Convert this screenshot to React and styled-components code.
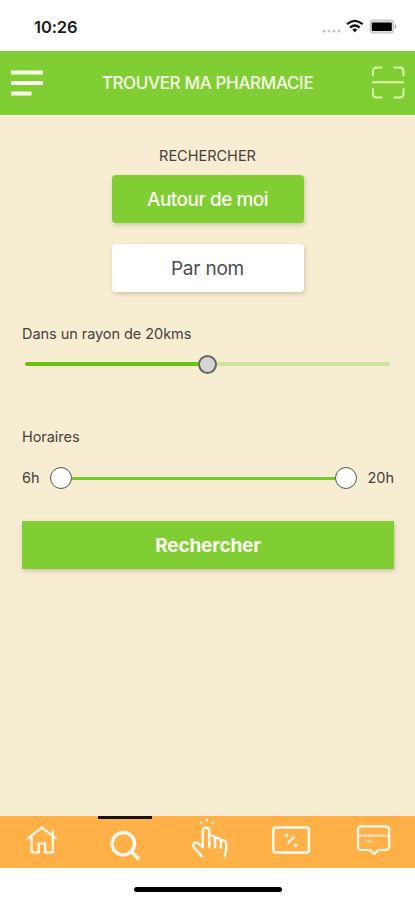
import styled, { createGlobalStyle } from "styled-components";

const GlobalStyle = createGlobalStyle`
  * {
    box-sizing: border-box;
  }
  body {
    margin: 0;
    background: #fff;
    font-family: Inter, "Liberation Sans", sans-serif;
  }
  button {
    font-family: inherit;
    padding: 0;
    border: none;
  }
`;

const Screen = styled.div`
  display: flex;
  flex-direction: column;
  width: 415px;
  height: 900px;
  overflow: hidden;
`;

const StatusBar = styled.div`
  display: flex;
  align-items: center;
  justify-content: space-between;
  height: 51px;
  padding: 3px 17px 0 34px;
`;

const Time = styled.span`
  font-size: 16.5px;
  font-weight: 600;
  letter-spacing: -0.1px;
  color: #1c1c1c;
`;

const Header = styled.header`
  display: flex;
  align-items: center;
  justify-content: space-between;
  height: 64px;
  padding: 0 10px 0 11px;
  background: #80ce33;
`;

const Title = styled.h1`
  margin: 0;
  padding-right: 2px;
  font-size: 17px;
  font-weight: 500;
  letter-spacing: -0.35px;
  color: #f8ffe9;
`;

const Main = styled.main`
  display: flex;
  flex-direction: column;
  flex: 1;
  padding: 31px 21px 0 22px;
  background: #f7edd3;
`;

const Choices = styled.div`
  display: flex;
  flex-direction: column;
  align-items: center;
  padding-right: 1px;
`;

const Label = styled.div`
  height: 20px;
  font-size: 14.5px;
  line-height: 20px;
  letter-spacing: ${(props) => props.$spacing || "-0.05px"};
  white-space: nowrap;
  color: #46423a;
`;

const Button = styled.button`
  width: 192px;
  height: 48px;
  margin-top: ${(props) => props.$top};
  border-radius: 4px;
  background: ${(props) => (props.$primary ? "#80ce33" : "#fff")};
  box-shadow: 1px 2px 4px rgba(90, 80, 50, 0.25);
  font-size: 19px;
  font-weight: ${(props) => (props.$primary ? 500 : 400)};
  letter-spacing: ${(props) => (props.$primary ? "-0.5px" : "-0.2px")};
  color: ${(props) => (props.$primary ? "#fbfff0" : "#4b4c50")};
`;

const SubmitButton = styled(Button)`
  flex: none;
  width: 372px;
  border-radius: 0;
  font-weight: 700;
  letter-spacing: -0.15px;
`;

const Field = styled.section`
  margin-top: ${(props) => props.$top};
`;

const RadiusSlider = styled.div`
  display: flex;
  align-items: center;
  height: 20px;
  margin: 10px 4px 0 3px;
`;

const Track = styled.div`
  flex: 1;
  height: ${(props) => props.$height || "4px"};
  border-radius: ${(props) => props.$radius || "0"};
  background: ${(props) => props.$color};
`;

const Thumb = styled.div`
  flex: none;
  width: ${(props) => props.$size};
  height: ${(props) => props.$size};
  border: ${(props) => props.$border};
  border-radius: 50%;
  background: ${(props) => props.$fill};
`;

const HoursRow = styled.div`
  display: flex;
  align-items: center;
  height: 22px;
  margin-top: 20px;
`;

const Hour = styled(Label)`
  width: ${(props) => props.$width};
  text-align: ${(props) => props.$align || "left"};
`;

const TabBar = styled.nav`
  display: grid;
  grid-template-columns: repeat(5, 1fr);
  height: 52px;
  background: #ffb148;
`;

const Tab = styled.a`
  position: relative;
  height: 52px;
  color: #fffaf0;

  svg {
    display: block;
  }
`;

const ActiveMark = styled.span`
  position: absolute;
  top: 0;
  left: 15px;
  width: 54px;
  height: 3px;
  background: #16120b;
`;

const HomeIndicator = styled.div`
  display: flex;
  justify-content: center;
  height: 32px;
  padding-top: 19px;

  &::after {
    content: "";
    width: 148px;
    height: 5px;
    border-radius: 3px;
    background: #000;
  }
`;

const StatusIcons = () => (
  <svg width="78" height="18" viewBox="0 0 78 18">
    <g fill="#c4c4c4">
      <circle cx="4" cy="13.2" r="1.4" />
      <circle cx="9" cy="13.2" r="1.4" />
      <circle cx="14" cy="13.2" r="1.4" />
      <circle cx="19" cy="13.2" r="1.4" />
    </g>
    <g fill="none" stroke="#151515" strokeWidth="2.3">
      <path d="M27 6.2 Q34.8 -0.4 42.6 6.2" />
      <path d="M30 9.6 Q34.8 5.4 39.6 9.6" />
    </g>
    <path d="M34.8 14.6 L32.3 11.6 Q34.8 9.6 37.3 11.6 Z" fill="#151515" />
    <rect x="50.2" y="2.2" width="23.4" height="12.8" rx="3.5" fill="#ddd" stroke="#c4c4c4" strokeWidth="1.2" />
    <rect x="51.8" y="4.4" width="20" height="8.6" rx="1" fill="#000" />
    <path d="M75 6.4 Q77 8.6 75 10.8 Z" fill="#777" />
  </svg>
);

const MenuIcon = () => (
  <svg width="34" height="27" viewBox="0 0 34 27" fill="#fbffed">
    <rect x="0" y="0.5" width="32" height="4" />
    <rect x="0" y="11" width="32" height="4" />
    <rect x="0" y="21.5" width="20.5" height="4" />
  </svg>
);

const ScanIcon = () => (
  <svg width="33" height="34" viewBox="0 0 33 34" fill="none" stroke="#ddf6ae" strokeWidth="2" strokeLinecap="round">
    <path d="M1 9.5 V5.5 Q1 1.5 5 1.5 H9.5" />
    <path d="M22.5 1.5 H27.5 Q31.5 1.5 31.5 5.5 V9.5" />
    <path d="M31.5 23 V27.5 Q31.5 31.5 27.5 31.5 H22.5" />
    <path d="M9.5 31.5 H5 Q1 31.5 1 27.5 V23" />
    <path d="M1 16.3 H31" />
  </svg>
);

const TabIcon = ({ width = 2.2, children }) => (
  <svg
    width="83"
    height="52"
    viewBox="0 0 83 52"
    fill="none"
    stroke="currentColor"
    strokeWidth={width}
    strokeLinecap="round"
    strokeLinejoin="round"
  >
    {children}
  </svg>
);

const HouseIcon = () => (
  <TabIcon>
    <path d="M28 22.4 L41.8 11.6 L55.8 22.4" />
    <path d="M52.6 19 V14.8" />
    <path d="M31.6 21 V36.5 H38.7 V27.3 H45.2 V36.5 H52.8 V21" />
  </TabIcon>
);

const SearchIcon = () => (
  <TabIcon width={3.5}>
    <circle cx="40.3" cy="27.7" r="11.2" />
    <path d="M48.6 36 L55 42.2" />
  </TabIcon>
);

const TapIcon = () => (
  <TabIcon width={2.4}>
    <path d="M36.3 40.6 L28 31.5 Q26.2 28.8 28.3 27.2 Q30.5 25.8 32.5 27.6 L36.8 31 V15 Q36.8 11.8 40 11.8 Q43.3 11.8 43.3 15 V31" />
    <path d="M43.3 19.6 Q49 18.5 49 24 V31.5" />
    <path d="M49 22 Q54.8 20.8 54.8 26 V31.5" />
    <path d="M54.8 24.5 Q60.3 23.5 60.3 28.5 V32 Q60.3 36 58.3 40.6" />
    <path d="M41 3.2 V4.6 M34.8 6.2 L35.8 7.4 M47.2 6.2 L46.2 7.4" strokeWidth="1.8" />
  </TabIcon>
);

const CouponIcon = () => (
  <TabIcon width={2.5}>
    <rect x="24.3" y="11.6" width="35.6" height="24.8" rx="2.5" />
    <path d="M39 27 L45 21" strokeWidth="2.2" />
    <circle cx="37.4" cy="19.4" r="1.8" fill="currentColor" stroke="none" />
    <circle cx="46.7" cy="29.3" r="1.8" fill="currentColor" stroke="none" />
  </TabIcon>
);

const MessageIcon = () => (
  <TabIcon>
    <path d="M30 10.3 H53.2 Q57.2 10.3 57.2 14.3 V30 Q57.2 34 53.2 34 H46.5 L42.2 38 L37.8 34 H30 Q26 34 26 30 V14.3 Q26 10.3 30 10.3 Z" />
    <path d="M26 19.7 H57" opacity="0.7" />
    <path d="M34.5 25.5 H39" strokeWidth="1.6" />
  </TabIcon>
);

const App = () => {
  return (
    <Screen>
      <GlobalStyle />
      <StatusBar>
        <Time>10:26</Time>
        <StatusIcons />
      </StatusBar>
      <Header>
        <MenuIcon />
        <Title>TROUVER MA PHARMACIE</Title>
        <ScanIcon />
      </Header>
      <Main>
        <Choices>
          <Label $spacing="0">RECHERCHER</Label>
          <Button $primary $top="9px">
            Autour de moi
          </Button>
          <Button $top="21px">Par nom</Button>
        </Choices>
        <Field $top="32px">
          <Label>Dans un rayon de 20kms</Label>
          <RadiusSlider>
            <Track $color="#69c411" $radius="2px 0 0 2px" />
            <Thumb $size="19px" $border="2px solid #65665e" $fill="#d5d5d5" />
            <Track $color="#cde29b" $radius="0 2px 2px 0" />
          </RadiusSlider>
        </Field>
        <Field $top="53px">
          <Label>Horaires</Label>
          <HoursRow>
            <Hour $width="28px">6h</Hour>
            <Thumb $size="22px" $border="1.5px solid #55564c" $fill="#fff" />
            <Track $color="#77c82b" $height="3px" />
            <Thumb $size="22px" $border="1.5px solid #55564c" $fill="#fff" />
            <Hour $width="37px" $align="right">
              20h
            </Hour>
          </HoursRow>
        </Field>
        <SubmitButton $primary $top="32px">
          Rechercher
        </SubmitButton>
      </Main>
      <TabBar>
        <Tab>
          <HouseIcon />
        </Tab>
        <Tab>
          <ActiveMark />
          <SearchIcon />
        </Tab>
        <Tab>
          <TapIcon />
        </Tab>
        <Tab>
          <CouponIcon />
        </Tab>
        <Tab>
          <MessageIcon />
        </Tab>
      </TabBar>
      <HomeIndicator />
    </Screen>
  );
};

export default App;
